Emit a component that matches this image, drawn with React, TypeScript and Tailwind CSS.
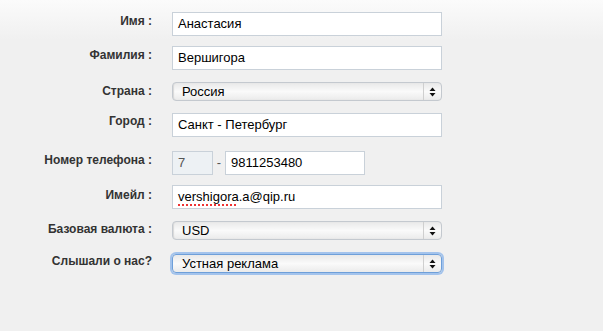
import React from "react";

const font = { fontFamily: '"Liberation Sans", Arial, Helvetica, sans-serif' };

function Label({ text, pt }: { text: string; pt: string }) {
  return (
    <div className={`w-[152px] shrink-0 text-right text-[12px] leading-[14px] font-bold text-[#333] ${pt}`}>
      {text}
    </div>
  );
}

function TextBox({ children, w = "w-[270px]" }: { children: React.ReactNode; w?: string }) {
  return (
    <div className={`${w} h-[24px] border border-[#c9d1d9] bg-white flex items-center pl-[5px] text-[13px] text-black`}>
      {children}
    </div>
  );
}

function Arrows() {
  return (
    <svg width="7" height="10" viewBox="0 0 7 10">
      <path d="M3.5 0.5 L6.5 4 L0.5 4 Z" fill="#111" />
      <path d="M3.5 9.5 L6.5 6 L0.5 6 Z" fill="#111" />
    </svg>
  );
}

function Select({ value, focused = false }: { value: string; focused?: boolean }) {
  return (
    <div
      className={`w-[270px] h-[19px] rounded-[4px] flex items-center bg-gradient-to-b from-[#e9e9e9] via-[#fafafa] to-[#ebebeb] ${
        focused
          ? "border border-[#6e9fd9] shadow-[0_0_0_2px_#a3c3ec]"
          : "border border-[#c4c9cf] shadow-[inset_1px_0_1px_#d8d8d8]"
      }`}
    >
      <div className="flex-1 pl-[9px] text-[13px] leading-[17px] text-black">{value}</div>
      <div className="w-[18px] h-full border-l border-[#cfcfcf] flex items-center justify-center">
        <Arrows />
      </div>
    </div>
  );
}

export default function App() {
  return (
    <div
      style={font}
      className="w-[603px] h-[331px] bg-gradient-to-b from-[#fbfbfb] to-[#f0f0f0] to-[40px] pt-[12px]"
    >
      <div className="flex gap-[20px]">
        <Label text="Имя :" pt="pt-[2px]" />
        <TextBox>Анастасия</TextBox>
      </div>
      <div className="flex gap-[20px] mt-[10px]">
        <Label text="Фамилия :" pt="pt-[2px]" />
        <TextBox>Вершигора</TextBox>
      </div>
      <div className="flex gap-[20px] mt-[12px]">
        <Label text="Страна :" pt="pt-[2px]" />
        <Select value="Россия" />
      </div>
      <div className="flex gap-[20px] mt-[12px]">
        <Label text="Город :" pt="pt-[1px]" />
        <TextBox>Санкт - Петербург</TextBox>
      </div>
      <div className="flex gap-[20px] mt-[14px]">
        <Label text="Номер телефона :" pt="pt-[2px]" />
        <div className="flex items-center">
          <div className="w-[41px] h-[24px] border border-[#c9d1d9] bg-[#edf1f4] flex items-center pl-[5px] text-[13px] text-[#555]">
            7
          </div>
          <div className="w-[12px] text-center text-[13px] text-[#555]">-</div>
          <TextBox w="w-[140px]">9811253480</TextBox>
        </div>
      </div>
      <div className="flex gap-[20px] mt-[10px]">
        <Label text="Имейл :" pt="pt-[3px]" />
        <TextBox>
          <span className="underline decoration-dotted decoration-[#e33] decoration-[1.5px] underline-offset-[3px]">
            vershigora
          </span>
          <span>.a@qip.ru</span>
        </TextBox>
      </div>
      <div className="flex gap-[20px] mt-[12px]">
        <Label text="Базовая валюта :" pt="pt-[1px]" />
        <Select value="USD" />
      </div>
      <div className="flex gap-[20px] mt-[14px]">
        <Label text="Слышали о нас?" pt="pt-0" />
        <Select value="Устная реклама" focused />
      </div>
    </div>
  );
}
